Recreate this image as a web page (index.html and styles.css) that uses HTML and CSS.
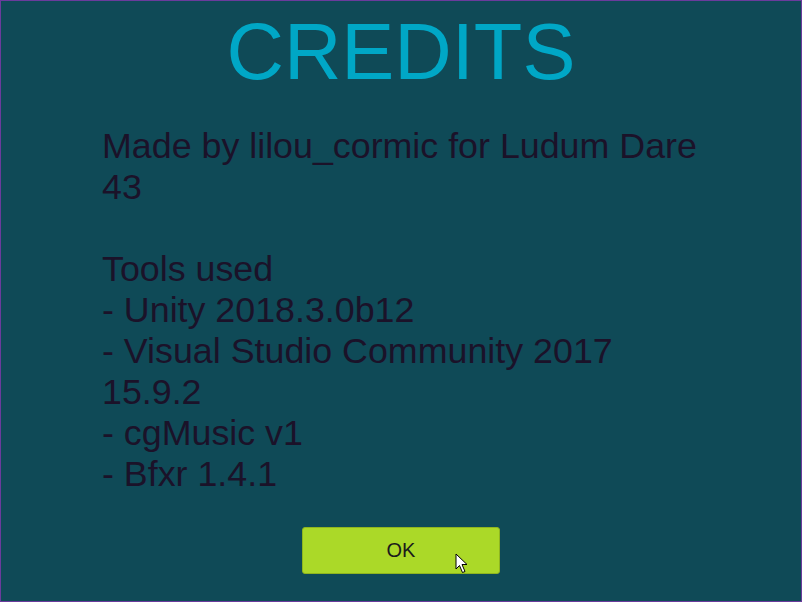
FILE: index.html
```html
<!DOCTYPE html>
<html>
<head>
<meta charset="utf-8">
<link rel="stylesheet" href="styles.css">
</head>
<body>
<div class="screen">
  <h1 class="title">CREDITS</h1>
  <div class="credits">
    <p class="para">Made by lilou_cormic for Ludum Dare 43</p>
    <p class="para">Tools used<br>- Unity 2018.3.0b12<br>- Visual Studio Community 2017 15.9.2<br>- cgMusic v1<br>- Bfxr 1.4.1</p>
  </div>
  <div class="actions">
    <button class="ok-btn">OK</button>
    <svg class="cursor" width="14" height="21" viewBox="0 0 14 21">
      <path d="M1 1 L1 16 L4.5 12.5 L7.5 19.5 L10 18.5 L7 11.5 L12 11.5 Z" fill="#fff" stroke="#000" stroke-width="1" stroke-linejoin="miter"/>
    </svg>
  </div>
</div>
</body>
</html>
```
FILE: styles.css
```css
html, body {
  margin: 0;
  padding: 0;
  background: #0f4a57;
}
.screen {
  width: 800px;
  height: 600px;
  border: 1px solid #6a3b9c;
  background: #0f4a57;
  display: flex;
  flex-direction: column;
  align-items: center;
  font-family: "Liberation Sans", Arial, sans-serif;
}
.title {
  margin: 11px 0 0 0;
  font-size: 79.5px;
  line-height: 80px;
  font-weight: normal;
  color: #00a7c6;
}
.credits {
  align-self: flex-start;
  margin: 34px 0 0 101px;
  width: 600px;
  color: #1b1229;
  font-size: 35.8px;
  line-height: 41px;
}
.para {
  margin: 0 0 41px 0;
}
.para:last-child {
  margin-bottom: 0;
}
.actions {
  position: relative;
  margin-top: 32px;
}
.ok-btn {
  width: 198px;
  height: 47px;
  background: #abd928;
  border: 1px solid #8fb51f;
  border-radius: 3px;
  font-family: "Liberation Sans", Arial, sans-serif;
  font-size: 20px;
  color: #1b1b1b;
  padding: 0;
  display: block;
}
.cursor {
  position: absolute;
  left: 153px;
  top: 26px;
}
```
